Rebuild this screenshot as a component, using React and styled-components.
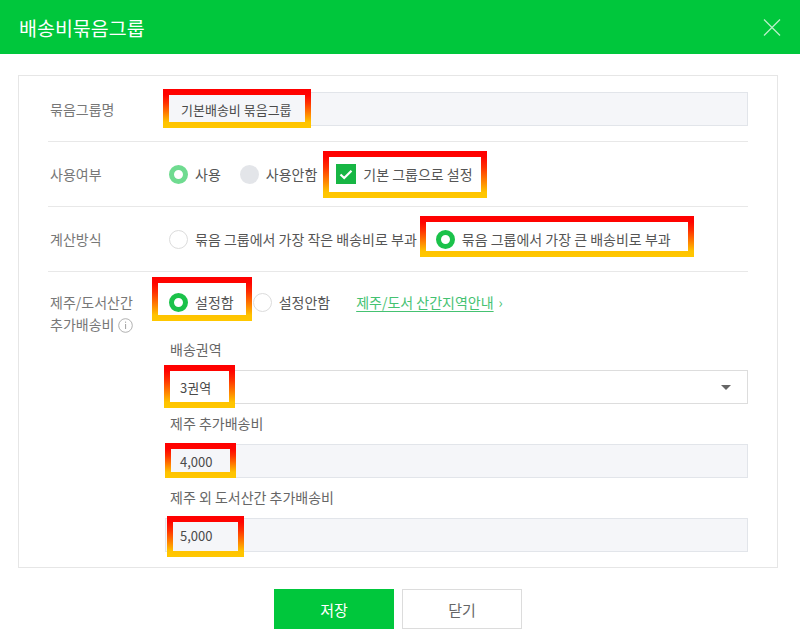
import React from "react";
import styled, { createGlobalStyle, css } from "styled-components";

const Global = createGlobalStyle`
  html, body { margin: 0; padding: 0; background: #fff; }
  body { font-family: "Noto Sans CJK KR", "Noto Sans", sans-serif; color: #555; }
  *, *::before, *::after { box-sizing: border-box; }
`;

const Page = styled.div`
  width: 800px;
  height: 642px;
  background: #fff;
  overflow: hidden;
`;

const Header = styled.header`
  height: 54px;
  background: #00c73c;
  display: flex;
  align-items: center;
  justify-content: space-between;
  padding: 0 19px 0 19px;
`;

const Title = styled.h1`
  margin: 0;
  font-size: 19.5px;
  font-weight: 400;
  color: #fff;
`;

const Close = styled.button`
  border: 0;
  background: transparent;
  padding: 0;
  width: 18px;
  height: 18px;
  display: flex;
  align-items: center;
  justify-content: center;
  color: rgba(255, 255, 255, 0.72);
`;

const Body = styled.div`
  padding: 21px 22px 0 18px;
`;

const Panel = styled.section`
  border: 1px solid #e6e6e6;
  padding: 0 29px;
`;

const Row = styled.div`
  display: grid;
  grid-template-columns: 117px 1fr;
  border-bottom: ${(p) => (p.$last ? "0" : "1px solid #e8e8e8")};
  ${(p) =>
    p.$top
      ? css`
          align-items: start;
          padding: 19px 0 15px;
        `
      : css`
          align-items: center;
          min-height: ${p.$h || 64}px;
          padding: ${p.$pad || "0"};
        `}
`;

const Label = styled.div`
  padding-left: 2px;
  font-size: 14px;
  line-height: 22px;
  color: #777;
`;

const Content = styled.div`
  display: flex;
  flex-direction: column;
`;

const Options = styled.div`
  display: flex;
  align-items: center;
  gap: 19px;
  padding-left: 4px;
  height: 22px;
`;

const Option = styled.label`
  display: inline-flex;
  align-items: center;
  gap: 7px;
  font-size: 14px;
  color: #555;
  white-space: nowrap;
  line-height: 22px;
`;

const Radio = styled.span`
  width: 19px;
  height: 19px;
  border-radius: 50%;
  flex: none;
  ${(p) =>
    p.$state === "on"
      ? css`
          border: 5px solid #1bc24a;
          background: #fff;
        `
      : p.$state === "soft"
      ? css`
          border: 5px solid #6fdb90;
          background: #fff;
        `
      : p.$state === "gray"
      ? css`
          background: #e3e5e9;
        `
      : css`
          border: 1px solid #dcdcdc;
          background: #fff;
        `}
`;

const Check = styled.span`
  width: 20px;
  height: 20px;
  background: #17b644;
  display: flex;
  align-items: center;
  justify-content: center;
  flex: none;
`;

const Marked = styled.span`
  position: relative;
  display: ${(p) => (p.$block ? "block" : "inline-flex")};
  align-items: center;
  &::after {
    content: "";
    position: absolute;
    left: ${(p) => p.$l}px;
    top: ${(p) => p.$t}px;
    width: ${(p) => p.$w}px;
    height: ${(p) => p.$h}px;
    border: 6px solid transparent;
    border-image: linear-gradient(to bottom, #ff0000 0%, #ff3000 30%, #ffc800 100%) 1;
    pointer-events: none;
  }
`;

const FieldWrap = styled.div`
  position: relative;
`;

const Field = styled.div`
  height: 34px;
  display: flex;
  align-items: center;
  justify-content: space-between;
  padding: 0 14px;
  font-size: 13px;
  color: #4a4a4a;
  border: 1px solid ${(p) => (p.$select ? "#dddddd" : "#e2e5ea")};
  background: ${(p) => (p.$select ? "#fff" : "#f5f6f9")};
`;

const FieldText = styled.span`
  padding-left: ${(p) => p.$pl || 0}px;
`;

const Caret = styled.span`
  width: 0;
  height: 0;
  border-left: 5px solid transparent;
  border-right: 5px solid transparent;
  border-top: 5px solid #666;
  margin-right: 2px;
`;

const SubLabel = styled.div`
  font-size: 14px;
  color: #666;
  line-height: 20px;
  margin: ${(p) => (p.$first ? "26px" : "9px")} 0 11px 5px;
`;

const GuideLink = styled.a`
  font-size: 14px;
  color: #45c271;
  text-decoration: underline;
  text-underline-offset: 3px;
  margin-left: 7px;
  white-space: nowrap;
  span {
    display: inline-block;
    margin-left: 5px;
  }
`;

const Info = styled.span`
  display: inline-flex;
  vertical-align: middle;
  margin-left: 4px;
  margin-top: -2px;
`;

const Footer = styled.div`
  display: flex;
  justify-content: center;
  gap: 8px;
  margin-top: 21px;
`;

const Button = styled.button`
  width: 120px;
  height: 40px;
  font-family: inherit;
  font-size: 15px;
  border: 1px solid ${(p) => (p.$primary ? "#00c73c" : "#dcdcdc")};
  background: ${(p) => (p.$primary ? "#00c73c" : "#fff")};
  color: ${(p) => (p.$primary ? "#fff" : "#666")};
`;

const CheckIcon = () => (
  <svg width="14" height="11" viewBox="0 0 14 11">
    <path d="M1.5 5.5 L5.2 9 L12.5 1.8" fill="none" stroke="#fff" strokeWidth="2.2" />
  </svg>
);

const InfoIcon = () => (
  <svg width="15" height="15" viewBox="0 0 15 15">
    <circle cx="7.5" cy="7.5" r="6.8" fill="none" stroke="#a8a8a8" strokeWidth="0.9" />
    <rect x="7" y="6" width="1.1" height="5" fill="#a8a8a8" />
    <rect x="7" y="3.6" width="1.1" height="1.2" fill="#a8a8a8" />
  </svg>
);

export default function App() {
  return (
    <Page>
      <Global />
      <Header>
        <Title>배송비묶음그룹</Title>
        <Close aria-label="닫기">
          <svg width="18" height="17" viewBox="0 0 18 17">
            <path d="M1 0.5 L17 16.5 M17 0.5 L1 16.5" stroke="currentColor" strokeWidth="1.3" />
          </svg>
        </Close>
      </Header>
      <Body>
        <Panel>
          <Row $pad="16px 0 15px" $h={65}>
            <Label>묶음그룹명</Label>
            <FieldWrap>
              <Marked $block $l={-2} $t={-3} $w={148} $h={39}>
                <Field>
                  <FieldText $pl={1}>기본배송비 묶음그룹</FieldText>
                </Field>
              </Marked>
            </FieldWrap>
          </Row>
          <Row $h={65}>
            <Label>사용여부</Label>
            <Options>
              <Option>
                <Radio $state="soft" />
                사용
              </Option>
              <Option>
                <Radio $state="gray" />
                사용안함
              </Option>
              <Marked $l={-13} $t={-12} $w={164} $h={47}>
                <Option>
                  <Check>
                    <CheckIcon />
                  </Check>
                  기본 그룹으로 설정
                </Option>
              </Marked>
            </Options>
          </Row>
          <Row $h={65}>
            <Label>계산방식</Label>
            <Options>
              <Option>
                <Radio />
                묶음 그룹에서 가장 작은 배송비로 부과
              </Option>
              <Marked $l={-16} $t={-12} $w={274} $h={41}>
                <Option>
                  <Radio $state="on" />
                  묶음 그룹에서 가장 큰 배송비로 부과
                </Option>
              </Marked>
            </Options>
          </Row>
          <Row $top $last>
            <Label>
              제주/도서산간
              <br />
              추가배송비
              <Info>
                <InfoIcon />
              </Info>
            </Label>
            <Content>
              <Options>
                <Marked $l={-17} $t={-14} $w={100} $h={44}>
                  <Option>
                    <Radio $state="on" />
                    설정함
                  </Option>
                </Marked>
                <Option>
                  <Radio />
                  설정안함
                </Option>
                <GuideLink href="#">
                  제주/도서 산간지역안내<span>›</span>
                </GuideLink>
              </Options>
              <SubLabel $first>배송권역</SubLabel>
              <FieldWrap>
                <Marked $block $l={-1} $t={-5} $w={71} $h={43}>
                  <Field $select>
                    <FieldText>3권역</FieldText>
                    <Caret />
                  </Field>
                </Marked>
              </FieldWrap>
              <SubLabel>제주 추가배송비</SubLabel>
              <FieldWrap>
                <Marked $block $l={0} $t={-1} $w={71} $h={35}>
                  <Field>
                    <FieldText>4,000</FieldText>
                  </Field>
                </Marked>
              </FieldWrap>
              <SubLabel>제주 외 도서산간 추가배송비</SubLabel>
              <FieldWrap>
                <Marked $block $l={2} $t={-2} $w={77} $h={41}>
                  <Field>
                    <FieldText>5,000</FieldText>
                  </Field>
                </Marked>
              </FieldWrap>
            </Content>
          </Row>
        </Panel>
        <Footer>
          <Button $primary>저장</Button>
          <Button>닫기</Button>
        </Footer>
      </Body>
    </Page>
  );
}
